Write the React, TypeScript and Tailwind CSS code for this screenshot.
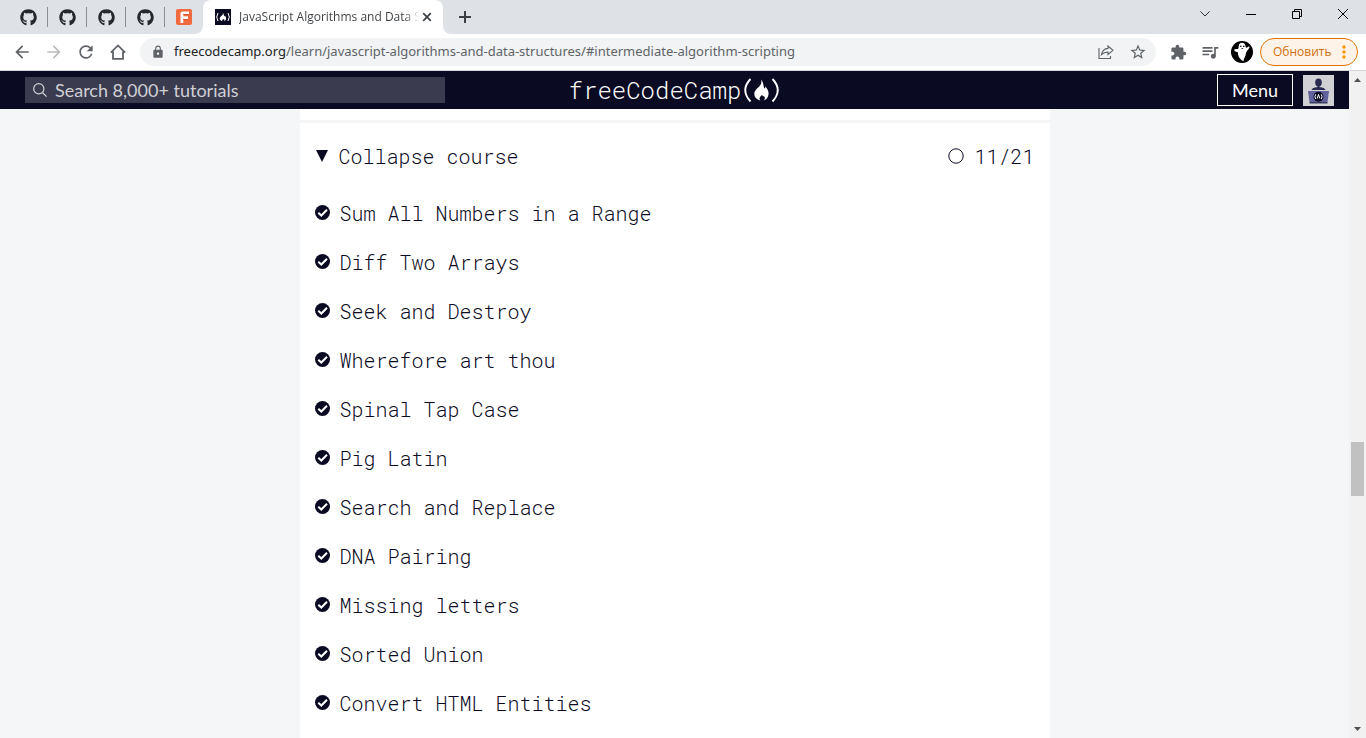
import React from 'react';
import { FaGithub } from 'react-icons/fa';
import { MdArrowBack, MdArrowForward, MdRefresh, MdLock, MdStarBorder, MdExtension, MdQueueMusic } from 'react-icons/md';

const lessons = [
  'Sum All Numbers in a Range',
  'Diff Two Arrays',
  'Seek and Destroy',
  'Wherefore art thou',
  'Spinal Tap Case',
  'Pig Latin',
  'Search and Replace',
  'DNA Pairing',
  'Missing letters',
  'Sorted Union',
  'Convert HTML Entities',
];

const FLAME =
  'M7 0C9 2 9.300 4.500 9.800 7.500C10.300 9.800 11.600 9 11.200 6.800C13.500 9.500 15 12 14.500 15C14 18 12.500 19.800 10 21C11.300 19 11 17.500 9.800 16.500C9 17.300 8.200 16.500 8.400 15C7.600 16 6 17 5.600 18.500C5.400 19.500 5.700 20.300 6.300 21C2.600 20 .3 17.600 .3 14.300C.3 10 5.400 8 6.900 4.500C7.500 3 7.500 1.500 7 0Z';

function TabBar() {
  return (
    <div className="flex h-[34px] shrink-0 bg-[#dee1e6] pl-[9px]">
      {[0, 1, 2, 3].map((n) => (
        <button key={n} aria-label="GitHub" className="flex w-[39px] items-center justify-center">
          <FaGithub className="ml-auto size-[17px] text-[#24292f]" />
          <span className="ml-auto h-5 w-px bg-[#8a8d91]" />
        </button>
      ))}
      <button aria-label="Pinned page" className="flex w-[38px] items-center justify-center">
        <svg viewBox="0 0 16 16" className="size-4">
          <rect width="16" height="16" rx="2" fill="#f26a3d" />
          <path d="M4.500 14V4.500Q4.500 2.500 6.500 2.500H13V5.200H7.300V7.300H12V10H7.300V14Z" fill="#fff" />
          <path d="M7.300 5.200H13V6H7.300ZM7.300 10H12V10.800H7.300Z" fill="#c9512b" />
        </svg>
      </button>
      <div className="relative flex w-60 items-center rounded-t-lg bg-white pr-2 pl-3">
        <svg viewBox="0 0 8 8" className="absolute bottom-0 -left-2 size-2">
          <path d="M8 0V8H0A8 8 0 0 0 8 0Z" fill="#fff" />
        </svg>
        <svg viewBox="0 0 8 8" className="absolute -right-2 bottom-0 size-2">
          <path d="M0 0V8H8A8 8 0 0 1 0 0Z" fill="#fff" />
        </svg>
        <svg viewBox="0 0 16 16" className="size-4 shrink-0">
          <rect width="16" height="16" fill="#0a0a23" />
          <path d="M3 4Q.4 8 3 12M13 4Q15.600 8 13 12" fill="none" stroke="#fff" />
          <path d={FLAME} transform="translate(4.600 3.800) scale(.45 .4)" fill="#fff" />
        </svg>
        <span className="ml-2 flex-1 overflow-hidden bg-linear-to-r from-[#3c4043] from-92% to-transparent bg-clip-text font-['Open_Sans','Noto_Sans',sans-serif] text-[12px] whitespace-nowrap text-transparent">
          JavaScript Algorithms and Data S
        </span>
        <button aria-label="Close tab" className="flex size-4 items-center justify-center">
          <svg viewBox="0 0 10 10" className="size-[10px]">
            <path d="M1.200 1.200L8.800 8.800M8.800 1.200L1.200 8.800" stroke="#3c4043" strokeWidth="1.700" />
          </svg>
        </button>
      </div>
      <button aria-label="New tab" className="flex w-11 items-center justify-center">
        <svg viewBox="0 0 12 12" className="size-3">
          <path d="M6 0V12M0 6H12" stroke="#3c4043" strokeWidth="2" />
        </svg>
      </button>
      <div className="ml-auto flex h-7">
        <button aria-label="Search tabs" className="flex w-[46px] items-center justify-center">
          <svg viewBox="0 0 10 6" className="h-[6px] w-[10px]"><path d="M.4 .4L5 5L9.600 .4" fill="none" stroke="#333" /></svg>
        </button>
        <button aria-label="Minimize" className="flex w-[46px] items-center justify-center">
          <span className="h-px w-[10px] bg-black" />
        </button>
        <button aria-label="Restore" className="flex w-[46px] items-center justify-center">
          <svg viewBox="0 0 10 10" className="size-[10px]"><path d="M.5 2.500H7.500V9.500H.5ZM2.500 2.500V.5H9.500V7.500H7.500" fill="none" stroke="#000" /></svg>
        </button>
        <button aria-label="Close window" className="flex w-[46px] items-center justify-center">
          <svg viewBox="0 0 10 10" className="size-[10px]"><path d="M0 0L10 10M10 0L0 10" stroke="#000" /></svg>
        </button>
      </div>
    </div>
  );
}

function ToolButton({ label, children }: { label: string; children: React.ReactNode }) {
  return (
    <button aria-label={label} className="flex size-8 shrink-0 items-center justify-center text-[#5f6368]">
      {children}
    </button>
  );
}

function Toolbar() {
  return (
    <div className="flex h-[37px] shrink-0 items-center border-b border-[#d5d7da] bg-white pr-2 pl-[6px] font-['Open_Sans','Noto_Sans',sans-serif]">
      <ToolButton label="Back"><MdArrowBack className="size-5" /></ToolButton>
      <ToolButton label="Forward"><MdArrowForward className="size-5 text-[#babcbe]" /></ToolButton>
      <ToolButton label="Reload"><MdRefresh className="size-5" /></ToolButton>
      <ToolButton label="Home">
        <svg viewBox="0 0 16 16" className="size-4">
          <path d="M.8 8.600L8 1.400L15.200 8.600M3 7.500V14.900H13V7.500" fill="none" stroke="currentColor" strokeWidth="1.800" />
        </svg>
      </ToolButton>
      <div className="ml-[6px] flex h-7 min-w-0 flex-1 items-center rounded-full bg-[#f1f3f4] pr-[2px] pl-[11px]">
        <MdLock className="size-[14px] shrink-0 text-[#5f6368]" />
        <div className="ml-[9px] min-w-0 flex-1 overflow-hidden font-['Noto_Sans','Open_Sans',sans-serif] text-[13px] whitespace-nowrap text-[#5f6368]">
          <span className="text-[#202124]">freecodecamp.org</span>/learn/javascript-algorithms-and-data-structures/#intermediate-algorithm-scripting
        </div>
        <ToolButton label="Share">
          <svg viewBox="0 0 16 16" className="size-4" fill="none" stroke="currentColor" strokeWidth="1.100">
            <path d="M1 4V14.500H12.500V12" />
            <path d="M10 2L15 6.300L10 10.500V8.100Q6 8 3.500 10.500Q4.500 4.900 10 4.400Z" />
          </svg>
        </ToolButton>
        <ToolButton label="Bookmark"><MdStarBorder className="size-[18px]" /></ToolButton>
      </div>
      <div className="ml-[6px] flex">
        <ToolButton label="Extensions"><MdExtension className="size-[17px]" /></ToolButton>
        <ToolButton label="Media controls">
          <MdQueueMusic className="size-5" />
        </ToolButton>
        <ToolButton label="Profile">
          <svg viewBox="0 0 22 22" className="size-[22px]">
            <circle cx="11" cy="11" r="11" fill="#000" />
            <path d="M11 1.800C8.500 1.800 7.600 3.500 7.600 6.500C7.500 8 6.500 8.200 5 8C3.500 7.800 2.800 9 3.500 10C4.500 11 6 10.800 6.800 11.300C7 15 8.500 18.500 12.500 20.300C12.500 18 14.500 16 15 12C15.500 10 17 9 18.500 6.500C18.800 5.300 17.500 5 16.700 6C16 7 15.200 7 14.700 6C14.200 3.200 13.300 1.800 11 1.800Z" fill="#fff" />
            <circle cx="9.800" cy="5.300" r=".8" /><circle cx="12.700" cy="5.300" r=".8" /><path d="M10.500 7.600H12.200" stroke="#000" strokeWidth=".8" />
          </svg>
        </ToolButton>
      </div>
      <button className="ml-[2px] flex h-7 w-[98px] shrink-0 items-center justify-between rounded-full border border-[#e37400] bg-[#fdf3e8] pr-[11px] pl-3 text-[12px] text-[#d56e0c]">
        Обновить
        <svg viewBox="0 0 4 14" className="h-[14px] w-1" fill="#f29900">
          <circle cx="2" cy="2" r="1.700" /><circle cx="2" cy="7" r="1.700" /><circle cx="2" cy="12" r="1.700" />
        </svg>
      </button>
    </div>
  );
}

function SiteHeader() {
  return (
    <header className="grid h-[38px] shrink-0 grid-cols-[1fr_auto_1fr] items-center bg-[#0a0a23] pr-[15px] font-[Lato,sans-serif]">
      <label className="ml-[25px] flex h-[26px] max-w-[420px] items-center bg-[#3b3b4f] pl-2">
        <svg viewBox="0 0 14 14" className="size-[14px] shrink-0" fill="none" stroke="#d0d0d5" strokeWidth="1.200">
          <circle cx="5.800" cy="5.800" r="5.100" /><path d="M9.500 9.500L13.600 13.600" />
        </svg>
        <input
          type="search"
          aria-label="Search"
          placeholder="Search 8,000+ tutorials"
          className="ml-2 w-full bg-transparent text-[18px] outline-none placeholder:text-[#d0d0d5]"
        />
      </label>
      <a href="#home" className="ml-4 flex items-center font-['Roboto_Mono','Liberation_Mono',monospace] text-[24px] leading-8 font-light text-white">
        freeCodeCamp
        <svg viewBox="0 0 40 26" className="h-[26px] w-10">
          <path d="M9.500 2Q-1 13 9.500 24.500M31.500 2Q42 13 31.500 24.500" fill="none" stroke="#fff" strokeWidth="1.900" />
          <path d={FLAME} transform="translate(13 2.500)" fill="#fff" />
        </svg>
      </a>
      <div className="flex items-center justify-end gap-[10px]">
        <button className="h-8 w-19 border border-white text-[18px] text-white">Menu</button>
        <a href="#profile" aria-label="Profile">
          <svg viewBox="0 0 31 31" className="size-[31px]">
            <rect width="31" height="31" fill="#d0d0d5" />
            <ellipse cx="15.500" cy="7.500" rx="3.300" ry="4" fill="#2a2a50" />
            <path d="M14.500 10H16.500V12Q22 12.500 22.500 15H8.500Q9 12.500 14.500 12Z" fill="#2a2a50" />
            <path d="M5 16H26L24.500 27H6.500Z" fill="#62629d" />
            <path d="M6.500 27H24.500V28.500H6.500Z" fill="#3b3b60" />
            <circle cx="15.500" cy="21.700" r="5" fill="#0a0a23" />
            <path d="M12.700 19.300Q11.200 21.700 12.700 24M18.300 19.300Q19.800 21.700 18.300 24M14.200 23.500L15.500 19.500L16.800 23.500" fill="none" stroke="#fff" />
          </svg>
        </a>
      </div>
    </header>
  );
}

function Scrollbar() {
  return (
    <div className="flex w-[17px] shrink-0 flex-col items-center bg-[#f1f1f1]">
      <svg viewBox="0 0 17 17" className="size-[17px] shrink-0"><path d="M5 11L8.500 7L12 11Z" fill="#505050" /></svg>
      <div className="flex w-full flex-1 flex-col items-center">
        <div className="grow-[354]" />
        <div className="h-[54px] w-[13px] bg-[#c1c1c1]" />
        <div className="grow-[225]" />
      </div>
      <svg viewBox="0 0 17 17" className="size-[17px] shrink-0"><path d="M5 6L8.500 10L12 6Z" fill="#505050" /></svg>
    </div>
  );
}

export default function App() {
  return (
    <div className="flex h-screen flex-col overflow-hidden">
      <TabBar />
      <Toolbar />
      <div className="flex min-h-0 flex-1">
        <div className="flex min-w-0 flex-1 flex-col">
          <SiteHeader />
          <div className="flex min-h-0 flex-1 justify-center overflow-hidden bg-[#f5f6f7]">
            <main className="flex w-full max-w-[750px] flex-col font-['Roboto_Mono','Liberation_Mono',monospace] text-[20px] leading-7 font-light text-[#0a0a23]">
              <div className="h-[11px] shrink-0 bg-white" />
              <section className="mt-[3px] flex-1 bg-white px-[15px]">
                <button className="flex h-[65px] w-full items-center">
                  <svg viewBox="0 0 14 14" className="size-[14px]"><path d="M1 1H13L7 13Z" fill="#0a0a23" /></svg>
                  <span className="ml-[10px]">Collapse course</span>
                  <svg viewBox="0 0 16 16" className="ml-auto size-4"><circle cx="8" cy="8" r="7.200" fill="none" stroke="#0a0a23" /></svg>
                  <span className="ml-[10px]">11/21</span>
                </button>
                <ul>
                  {lessons.map((lesson) => (
                    <li key={lesson} className="flex h-[49px] items-center">
                      <svg viewBox="0 0 15 15" className="size-[15px] shrink-0">
                        <circle cx="7.500" cy="7.500" r="7.500" fill="#0a0a23" />
                        <path d="M3.300 7.700L6.300 10.500L12 4.700" fill="none" stroke="#fff" strokeWidth="2" />
                      </svg>
                      <a href="#lesson" className="ml-[10px]">{lesson}</a>
                    </li>
                  ))}
                </ul>
              </section>
            </main>
          </div>
        </div>
        <Scrollbar />
      </div>
    </div>
  );
}
